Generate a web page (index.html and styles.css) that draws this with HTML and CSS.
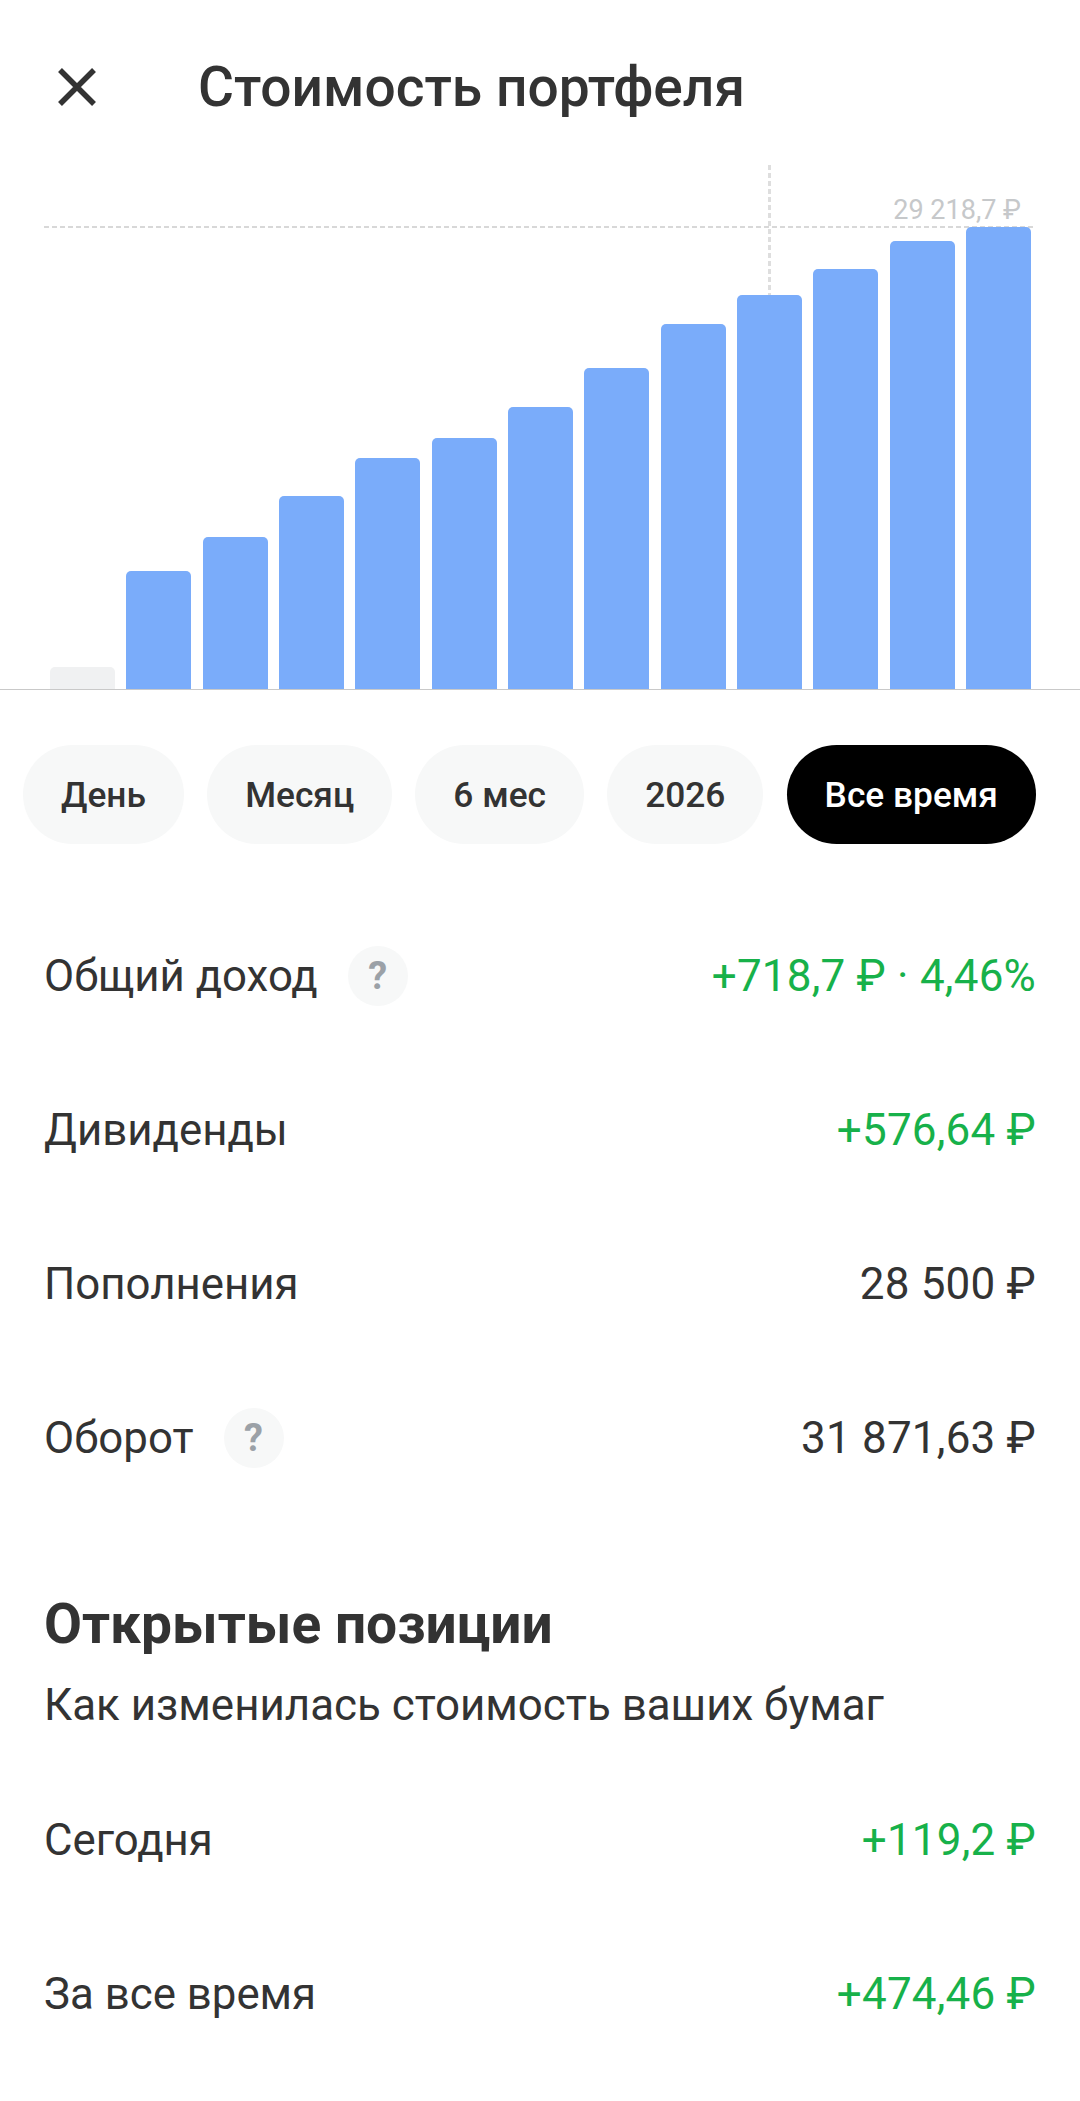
FILE: index.html
```html
<!DOCTYPE html>
<html lang="ru">
    <head>
        <meta charset="utf-8">
        <meta name="viewport" content="width=device-width, initial-scale=1.0">
        <title>Стоимость портфеля</title>
        <link rel="stylesheet" href="styles.css">
    </head>
    <body>
        <div id="container">
            <div id="header">
                <svg class="close" viewBox="0 0 44 44" width="44" height="44">
                    <path d="M5 5 L39 39 M39 5 L5 39" stroke="#333" stroke-width="5.5" fill="none"></path>
                </svg>
                <h1>Стоимость портфеля</h1>
            </div>

            <div id="chart">
                <div class="vline"></div>
                <div class="hline"></div>
                <div class="max">29 218,7 ₽</div>
                <div class="bars">
                    <div class="bar empty" style="height: 22px"></div>
                    <div class="bar" style="height: 118px"></div>
                    <div class="bar" style="height: 152px"></div>
                    <div class="bar" style="height: 193px"></div>
                    <div class="bar" style="height: 231px"></div>
                    <div class="bar" style="height: 251px"></div>
                    <div class="bar" style="height: 282px"></div>
                    <div class="bar" style="height: 321px"></div>
                    <div class="bar" style="height: 365px"></div>
                    <div class="bar" style="height: 394px"></div>
                    <div class="bar" style="height: 420px"></div>
                    <div class="bar" style="height: 448px"></div>
                    <div class="bar" style="height: 462px"></div>
                </div>
            </div>

            <div id="periods">
                <button>День</button>
                <button>Месяц</button>
                <button>6 мес</button>
                <button>2026</button>
                <button class="active">Все время</button>
            </div>

            <div class="rows">
                <div class="row">
                    <span class="label">Общий доход <span class="hint">?</span></span>
                    <span class="value green">+718,7 ₽ · 4,46%</span>
                </div>
                <div class="row">
                    <span class="label">Дивиденды</span>
                    <span class="value green">+576,64 ₽</span>
                </div>
                <div class="row">
                    <span class="label">Пополнения</span>
                    <span class="value">28 500 ₽</span>
                </div>
                <div class="row">
                    <span class="label">Оборот <span class="hint">?</span></span>
                    <span class="value">31 871,63 ₽</span>
                </div>
            </div>

            <h2>Открытые позиции</h2>
            <p id="subtitle">Как изменилась стоимость ваших бумаг</p>

            <div class="rows">
                <div class="row">
                    <span class="label">Сегодня</span>
                    <span class="value green">+119,2 ₽</span>
                </div>
                <div class="row">
                    <span class="label">За все время</span>
                    <span class="value green">+474,46 ₽</span>
                </div>
            </div>
        </div>
    </body>
</html>
```

FILE: styles.css
```css
* {
    box-sizing: border-box;
}

body {
    margin: 0;
    background: #fff;
    color: #333;
    font-family: Roboto, "Noto Sans", sans-serif;
}

#container {
    width: 1080px;
    height: 2101px;
    overflow: hidden;
}

#header {
    display: flex;
    align-items: center;
    height: 72px;
    margin-top: 51px;
    padding-left: 55px;
}

.close {
    flex: none;
}

h1 {
    margin: 0 0 0 99px;
    font-size: 55.1px;
    font-weight: 500;
    line-height: 72px;
}

#chart {
    position: relative;
    height: 523px;
    margin-top: 44px;
    border-bottom: 1px solid #c9c9c9;
}

.vline {
    position: absolute;
    left: 768px;
    top: -2px;
    width: 3px;
    height: 130px;
    background: repeating-linear-gradient(to bottom, #dedede 0 5px, transparent 5px 8px);
}

.hline {
    position: absolute;
    left: 44px;
    right: 44px;
    top: 59px;
    height: 2px;
    background: repeating-linear-gradient(to right, #d8d8d8 0 5px, transparent 5px 8px);
}

.max {
    position: absolute;
    right: 59px;
    top: 27px;
    font-size: 27px;
    line-height: 32px;
    color: #c6c8ca;
}

.bars {
    display: flex;
    align-items: flex-end;
    gap: 11.4px;
    height: 100%;
    padding: 0 49px 0 50px;
}

.bar {
    position: relative;
    flex: 1;
    background: #7aacfa;
    border-radius: 5px 5px 0 0;
}

.bar.empty {
    background: #f0f1f2;
}

#periods {
    display: flex;
    gap: 23.2px;
    margin-top: 55px;
    padding-left: 23px;
}

#periods button {
    height: 99px;
    padding: 0 38px;
    border: none;
    border-radius: 50px;
    background: #f7f8f8;
    color: #333;
    font-family: inherit;
    font-size: 35.3px;
    font-weight: 500;
}

#periods button.active {
    background: #000;
    color: #fff;
}

.rows {
    margin-top: 55px;
}

.row {
    display: flex;
    justify-content: space-between;
    align-items: center;
    height: 154px;
    padding: 0 44px;
    font-size: 43.8px;
}

.value {
    font-size: 44px;
    letter-spacing: 0.2px;
}

.label {
    display: flex;
    align-items: center;
    gap: 30px;
}

.hint {
    width: 60px;
    height: 60px;
    border-radius: 50%;
    background: #f7f8f8;
    color: #9ba1a7;
    font-size: 38px;
    font-weight: 700;
    line-height: 60px;
    text-align: center;
}

.green {
    color: #17b14a;
}

h2 {
    margin: 79px 0 0;
    padding-left: 44px;
    font-size: 55.1px;
    font-weight: 700;
    line-height: 60px;
}

#subtitle {
    margin: 26px 0 0;
    padding-left: 44px;
    font-size: 43.9px;
    line-height: 50px;
}

#subtitle + .rows {
    margin-top: 33px;
}
```
